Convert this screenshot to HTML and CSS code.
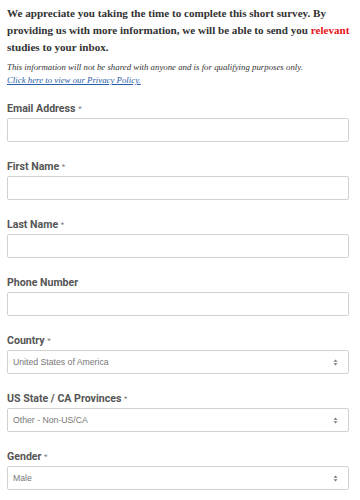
FILE: index.html
```html
<!DOCTYPE html>
<html>
<head>
<meta charset="utf-8">
<link rel="stylesheet" href="styles.css">
</head>
<body>
<div class="page">
  <p class="intro">We appreciate you taking the time to complete this short survey. By providing us with more information, we will be able to send you <span class="red">relevant</span> studies to your inbox.</p>
  <p class="note"><em>This information will not be shared with anyone and is for qualifying purposes only.</em><br><a href="#">Click here to view our Privacy Policy.</a></p>
  <form class="form">
    <div class="field">
      <label class="label">Email Address <span class="req">*</span></label>
      <div class="input"></div>
    </div>
    <div class="field">
      <label class="label">First Name <span class="req">*</span></label>
      <div class="input"></div>
    </div>
    <div class="field">
      <label class="label">Last Name <span class="req">*</span></label>
      <div class="input"></div>
    </div>
    <div class="field">
      <label class="label">Phone Number</label>
      <div class="input"></div>
    </div>
    <div class="field">
      <label class="label">Country <span class="req">*</span></label>
      <div class="input select"><span>United States of America</span><svg width="5" height="7" viewBox="0 0 5 7"><path d="M2.5 0.5L4.5 2.8H0.5Z M2.5 6.5L4.5 4.2H0.5Z" fill="#777"/></svg></div>
    </div>
    <div class="field">
      <label class="label">US State / CA Provinces <span class="req">*</span></label>
      <div class="input select"><span>Other - Non-US/CA</span><svg width="5" height="7" viewBox="0 0 5 7"><path d="M2.5 0.5L4.5 2.8H0.5Z M2.5 6.5L4.5 4.2H0.5Z" fill="#777"/></svg></div>
    </div>
    <div class="field">
      <label class="label">Gender <span class="req">*</span></label>
      <div class="input select"><span>Male</span><svg width="5" height="7" viewBox="0 0 5 7"><path d="M2.5 0.5L4.5 2.8H0.5Z M2.5 6.5L4.5 4.2H0.5Z" fill="#777"/></svg></div>
    </div>
  </form>
</div>
</body>
</html>
```
FILE: styles.css
```css
html, body { margin: 0; padding: 0; background: #fff; }
.page { padding: 5px 11px 0 7px; }
.intro {
  margin: 0 -6px 0 0;
  font-family: "Liberation Serif", serif;
  font-weight: bold;
  font-size: 11.1px;
  line-height: 17px;
  color: #333;
}
.red { color: #e8141b; }
.note {
  margin: 5px 0 0;
  font-family: "Liberation Serif", serif;
  font-size: 8.8px;
  line-height: 13px;
  color: #333;
}
.note a { color: #2a5ea8; font-style: italic; text-decoration: underline; }
.form { display: flex; flex-direction: column; gap: 18px; margin-top: 15px; }
.field { display: flex; flex-direction: column; gap: 3px; }
.label {
  font-family: Roboto, "Liberation Sans", Arial, sans-serif;
  font-weight: bold;
  font-size: 10.6px;
  line-height: 13px;
  color: #555;
}
.req { font-weight: normal; font-size: 8px; vertical-align: top; color: #777; }
.input {
  height: 22px;
  border: 1px solid #d2d2d2;
  border-radius: 2px;
  background: #fff;
}
.select {
  display: flex;
  align-items: center;
  justify-content: space-between;
  padding: 0 10px 0 5px;
  font-family: "Liberation Sans", Arial, sans-serif;
  font-size: 8.7px;
  color: #777;
}
```
